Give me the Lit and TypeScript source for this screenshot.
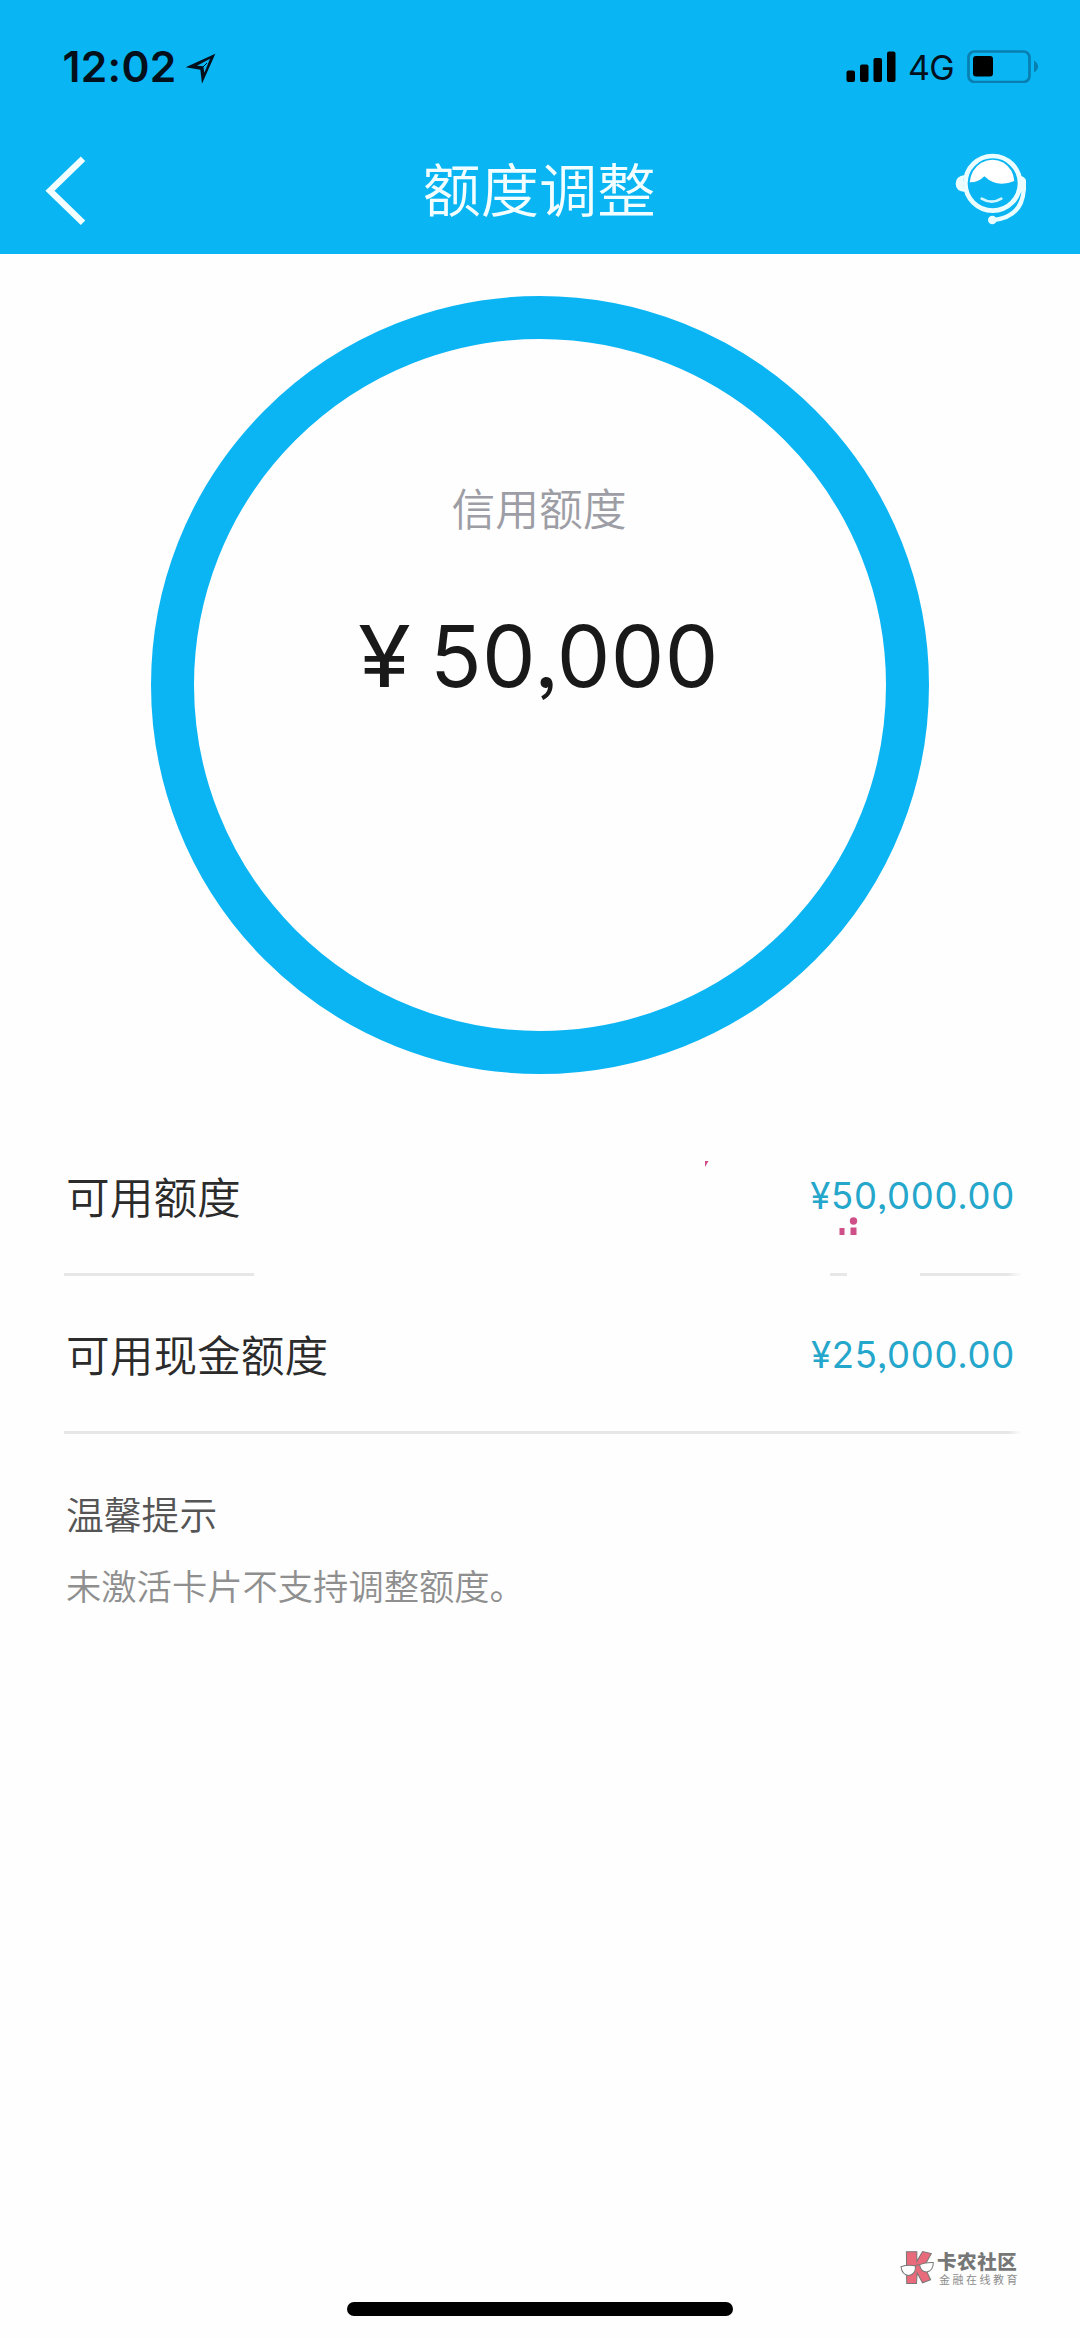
import { LitElement, html, css, svg } from "lit";
import { customElement, property } from "lit/decorators.js";

@customElement("status-bar")
class StatusBar extends LitElement {
  static styles = css`
    :host { display: flex; height: 132px; padding: 0 40px 0 62.5px; box-sizing: border-box; justify-content: space-between; color: #03101c; font-family: Inter, sans-serif; }
    .left, .right { display: flex; align-items: flex-start; }
    .time { margin-top: 41px; font-size: 42.5px; font-weight: 600; line-height: 52px; width: 122.5px; white-space: nowrap; letter-spacing: 0.3px; }
    .arrow { width: 31px; height: 32px; margin-top: 53px; }
    .bars { width: 50px; height: 32px; margin-top: 51px; margin-right: 12px; }
    .net { margin-top: 46px; font-size: 34px; line-height: 44px; width: 59px; letter-spacing: -0.6px; }
    .battery { width: 73px; height: 34px; margin-top: 49px; }
  `;
  render() {
    return html`
      <div class="left">
        <div class="time">12:02</div>
        <svg class="arrow" viewBox="0 0 93 96">
          <path fill="#03101c" fill-rule="evenodd" d="M91 2 L51 92 L46 50 L2 43 Z M75 17 L36 38 L55 40 L58 59 Z"/>
          <path d="M52 44 L66 30" stroke="#03101c" stroke-width="3"/>
        </svg>
      </div>
      <div class="right">
        <svg class="bars" viewBox="0 0 50 32">
          <rect x="0.5" y="19.5" width="8.5" height="11.5" rx="2"/>
          <rect x="14" y="13.5" width="8.5" height="17.5" rx="2"/>
          <rect x="27.5" y="7" width="8.5" height="24" rx="2"/>
          <rect x="41" y="0.5" width="8.5" height="30.5" rx="2"/>
        </svg>
        <div class="net">4G</div>
        <svg class="battery" viewBox="0 0 73 34">
          <rect x="1.5" y="2.5" width="61" height="30.5" rx="6" fill="none" stroke="#087fb0" stroke-width="2.7"/>
          <rect x="6" y="7" width="20" height="20.5" rx="3"/>
          <path d="M67 11.5 Q71 14 71 17.5 Q71 21 67 23.5 Z" fill="#087fb0"/>
        </svg>
      </div>`;
  }
}

@customElement("nav-bar")
class NavBar extends LitElement {
  static styles = css`
    :host { display: grid; grid-template-columns: 130px 1fr 130px; height: 121px; color: #f2feff; }
    .back { width: 42px; height: 72px; margin: 23px 0 0 44px; }
    .title { margin: 12.5px 0 0 -2px; font: 350 58.3px/84px "Noto Sans CJK SC", sans-serif; text-align: center; white-space: nowrap; }
    .service { width: 74px; height: 74px; margin: 20px 0 0 4px; }
  `;
  render() {
    return html`
      <svg class="back" viewBox="0 0 42 72"><path d="M39 3.7 L6 35.7 L39 67.8" fill="none" stroke="#f2feff" stroke-width="6.4"/></svg>
      <h1 class="title">额度调整</h1>
      <svg class="service" viewBox="462 396 222 222">
        <circle cx="578" cy="490" r="82" fill="none" stroke="#ebfdff" stroke-width="14"/>
        <path d="M494 465 Q467 468 467 491 Q467 514 496 516 Q485 491 494 465Z M660 467 Q672 468 678 480 L678 510 Q675 517 656 515 Q668 491 660 467Z" fill="#ebfdff"/>
        <path d="M509 487 Q513 447 544 428 Q578 411 611 428 Q640 447 643 483 Q591 505 553 469 Q535 488 509 487Z" fill="#fff"/>
        <path d="M545 536 Q575 554 604 536" fill="none" stroke="#d4f7ff" stroke-width="8" stroke-linecap="round"/>
        <path d="M671 510 Q666 590 580 600" fill="none" stroke="#ebfdff" stroke-width="13"/>
        <circle cx="577" cy="600" r="13" fill="#ebfdff"/>
      </svg>`;
  }
}

@customElement("limit-ring")
class LimitRing extends LitElement {
  @property() label = "";
  @property() amount = "";
  static styles = css`
    :host { display: flex; flex-direction: column; align-items: center; box-sizing: border-box; width: 778px; height: 778px; border: 43.5px solid #0bb5f4; border-radius: 50%; margin: 42.5px auto 0; padding-top: 136px; }
    .label { font: 350 43.8px/64px "Noto Sans CJK SC", sans-serif; color: #9d9da5; margin-left: -2px; }
    .amount { display: flex; gap: 22px; margin-top: 66px; font: 400 85px/104px Inter, sans-serif; font-feature-settings: "ss03"; color: #191919; }
    .sign { transform: scaleX(1.13); }
    .digits { letter-spacing: 0.4px; }
  `;
  render() {
    return html`
      <div class="label">${this.label}</div>
      <div class="amount"><span class="sign">¥</span><span class="digits">${this.amount}</span></div>`;
  }
}

@customElement("limit-row")
class LimitRow extends LitElement {
  @property() label = "";
  @property() amount = "";
  static styles = css`
    :host { display: flex; justify-content: space-between; align-items: center; height: 155.5px; padding: 0 8px 0 2px; box-sizing: border-box; }
    .label { font: 350 43.7px/64px "Noto Sans CJK SC", sans-serif; color: #2b2b2b; }
    .amount { font: 400 36.5px/46px Inter, sans-serif; font-feature-settings: "ss03"; color: #25a6cb; letter-spacing: 0.7px; padding-top: 3px; }
  `;
  render() {
    return html`<span class="label">${this.label}</span><span class="amount">${this.amount}</span>`;
  }
}

const mascot = svg`
  <path d="M19 5 L50 5 L50 33 L67 4 L93 10 L72 48 L91 88 L67 97 L51 68 L49 99 L20 99 Z" fill="#e96b7b" stroke="#777" stroke-width="3"/>
  <path d="M3 49 Q24 42 46 47 Q47 73 26 75 Q6 74 3 49Z M58 43 Q77 36 99 37 Q99 62 79 65 Q62 65 58 43Z" fill="#fff" stroke="#777" stroke-width="3"/>
  <path d="M46 48 Q52 41 58 44" fill="none" stroke="#777" stroke-width="3"/>`;

@customElement("app-root")
class AppRoot extends LitElement {
  static styles = css`
    :host { display: flex; flex-direction: column; position: relative; width: 1080px; height: 2338px; background: #fefefe; overflow: hidden; }
    .header { background: #09b5f3; height: 253.5px; flex: none; }
    .list { margin: 43px 57px 0 64px; }
    .divider { display: grid; grid-template-columns: 190px 576px 17px 73px 102px; height: 3px; }
    .divider i { background: #e7e7e7; }
    .divider .gap { background: none; }
    .divider .fade, .rule { background: linear-gradient(90deg, #e7e7e7 calc(100% - 14px), #fefefe); }
    .rule { height: 3px; width: 958px; }
    .tips { margin: 51px 66px 0; font-family: "Noto Sans CJK SC", sans-serif; font-weight: 350; white-space: nowrap; }
    .tips-title { margin: 0; font-size: 37.8px; font-weight: 350; line-height: 56px; color: #555; }
    .tips-text { margin: 18px 0 0; font-size: 35.3px; line-height: 52px; color: #8f8f8f; }
    .mark { position: absolute; }
    .tick { left: 705px; top: 1161px; width: 4px; height: 6px; }
    .dots { left: 838px; top: 1216px; width: 20px; height: 19px; }
    .brand { position: absolute; left: 900px; top: 2250px; display: flex; gap: 2px; font-family: "Noto Sans CJK SC", sans-serif; color: #777; white-space: nowrap; }
    .mascot { width: 35px; height: 36px; }
    .brand-name { font-size: 19.5px; font-weight: 900; line-height: 22px; letter-spacing: 0.6px; }
    .brand-sub { font-size: 11px; line-height: 15px; letter-spacing: 2.5px; padding-left: 2px; color: #8c8c8c; }
    .home { width: 386px; height: 14.5px; border-radius: 8px; background: #000; margin: auto auto 22px; }
  `;
  render() {
    return html`
      <header class="header"><status-bar></status-bar><nav-bar></nav-bar></header>
      <limit-ring label="信用额度" amount="50,000"></limit-ring>
      <section class="list">
        <limit-row label="可用额度" amount="¥50,000.00"></limit-row>
        <div class="divider"><i></i><i class="gap"></i><i></i><i class="gap"></i><i class="fade"></i></div>
        <limit-row label="可用现金额度" amount="¥25,000.00"></limit-row>
        <div class="rule"></div>
      </section>
      <section class="tips">
        <h2 class="tips-title">温馨提示</h2>
        <p class="tips-text">未激活卡片不支持调整额度。</p>
      </section>
      <svg class="mark tick" viewBox="0 0 4 6"><path d="M0 0 H3.5 L0 6Z" fill="#d14a88"/></svg>
      <svg class="mark dots" viewBox="0 0 20 19"><rect x="1.5" y="12" width="5" height="7" fill="#cf5088"/><rect x="12.5" y="11.5" width="6" height="7.5" fill="#cf5088"/><circle cx="15.5" cy="5" r="3.7" fill="#cf5088"/></svg>
      <div class="brand">
        <svg class="mascot" viewBox="0 0 104 106">${mascot}</svg>
        <div><div class="brand-name">卡农社区</div><div class="brand-sub">金融在线教育</div></div>
      </div>
      <div class="home"></div>`;
  }
}
